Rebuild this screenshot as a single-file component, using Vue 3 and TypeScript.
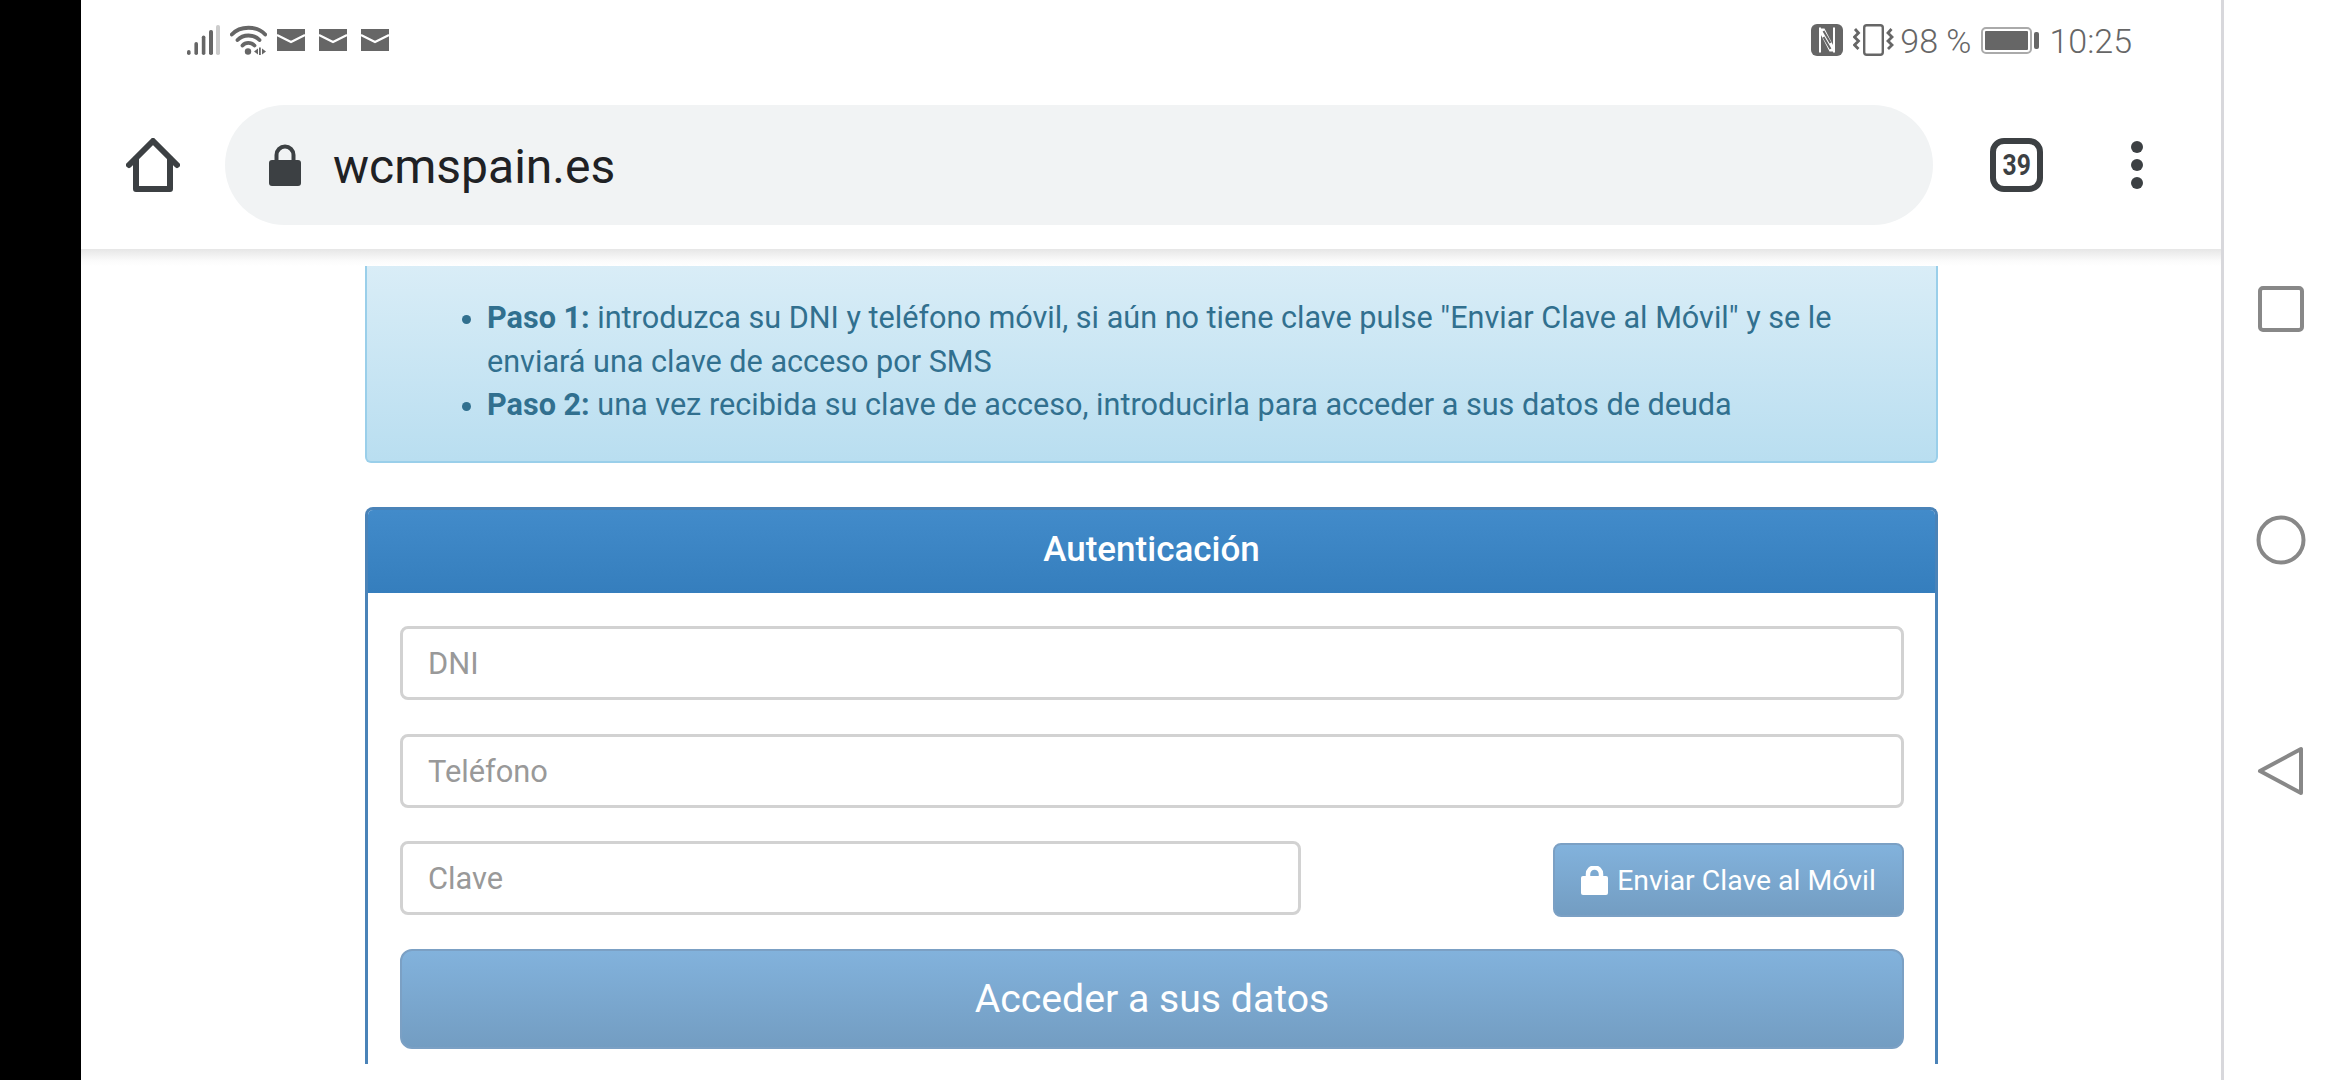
<script setup lang="ts">
const steps = [
  { label: 'Paso 1:', text: ' introduzca su DNI y teléfono móvil, si aún no tiene clave pulse "Enviar Clave al Móvil" y se le enviará una clave de acceso por SMS' },
  { label: 'Paso 2:', text: ' una vez recibida su clave de acceso, introducirla para acceder a sus datos de deuda' },
]
</script>

<template>
  <div class="screen">
    <div class="letterbox"></div>
    <div class="phone">
      <header class="chrome">
        <div class="status">
          <div class="status-left">
            <svg class="signal" width="33" height="30" viewBox="0 0 33 30">
              <rect x="0" y="25" width="3.600" height="5" rx="1.800" fill="#666" />
              <rect x="7.400" y="17" width="3.600" height="13" rx="1.800" fill="#666" />
              <rect x="14.800" y="10.500" width="3.600" height="19.500" rx="1.800" fill="#666" />
              <rect x="22" y="5" width="4" height="25" rx="1.800" fill="#666" />
              <rect x="29" y="0" width="4" height="30" rx="1.800" fill="#ccc" />
            </svg>
            <svg class="wifi" width="37" height="30" viewBox="0 0 37 30" fill="none" stroke="#666" stroke-width="3.800" stroke-linecap="round">
              <path d="M1.800 9.500C10 .5 27 .5 35.200 9.500" />
              <path d="M7.500 15C13 9 24 9 29.500 15" />
              <path d="M12.500 20.500C15.500 17 21 17 24.500 20.500" />
              <circle cx="18" cy="26.500" r="3.200" fill="#666" stroke="none" />
              <path d="M24 26.500L28 23.500V29.500Z" fill="#666" stroke="none" />
              <rect x="29" y="22.500" width="1.800" height="7.500" fill="#666" stroke="none" />
              <path d="M32 23.500V29.500L36 26.500Z" fill="#666" stroke="none" />
            </svg>
            <svg v-for="n in 3" :key="n" class="mail" width="28" height="22" viewBox="0 0 28 22">
              <rect width="28" height="22" fill="#666" />
              <path d="M0 6L14 13L28 6" fill="none" stroke="#fff" stroke-width="2.200" />
            </svg>
          </div>
          <div class="status-right">
            <svg class="nfc" width="32" height="32" viewBox="0 0 32 32">
              <rect width="32" height="32" rx="6" fill="#666" />
              <path d="M9 3.500V28.500M23 3.500V28.500" stroke="#fff" stroke-width="2" />
              <path d="M9.500 4.500H13.500L22.500 22V27.500H18.500L9.500 10Z" fill="#fff" />
              <path d="M12.500 13L19.500 25M12.500 7L19.500 19" stroke="#666" stroke-width="2" />
            </svg>
            <svg class="vibrate" width="41" height="32" viewBox="0 0 41 32" fill="none" stroke="#666">
              <rect x="11.200" y="1.200" width="18.600" height="29.600" rx="2.500" stroke-width="2.400" />
              <path d="M2 5L5.500 9L1.500 13L5.500 17L1.500 21L5.500 25" stroke-width="2.800" />
              <path d="M38.500 5L35 9L39 13L35 17L39 21L35 25" stroke-width="2.800" />
            </svg>
            <span class="status-text pct">98 %</span>
            <svg class="battery" width="58" height="27" viewBox="0 0 58 27">
              <rect x="1" y="1" width="49" height="25" rx="4" fill="none" stroke="#aaa" stroke-width="2" />
              <rect x="4" y="4" width="43" height="19" rx="1" fill="#666" />
              <rect x="53" y="5" width="5" height="17" rx="2" fill="#666" />
            </svg>
            <span class="status-text time">10:25</span>
          </div>
        </div>
        <div class="toolbar">
          <svg class="home" width="54" height="54" viewBox="0 0 54 54" fill="none" stroke="#3c4043" stroke-width="6" stroke-linecap="round" stroke-linejoin="round">
            <path d="M3 27L27 3L51 27" />
            <path d="M10 21V51H44V21" />
          </svg>
          <div class="omnibox">
            <svg class="lock" width="32" height="42" viewBox="0 0 32 42">
              <path d="M7.500 18V11a8.500 8.500 0 0 1 17 0V18" fill="none" stroke="#3c4043" stroke-width="4" />
              <rect y="16" width="32" height="26" rx="3" fill="#3c4043" />
            </svg>
            <span class="url">wcmspain.es</span>
          </div>
          <div class="tabs"><span>39</span></div>
          <div class="menu"><i></i><i></i><i></i></div>
        </div>
      </header>
      <div class="shade"></div>
      <main class="page">
        <section class="alert">
          <ul>
            <li v-for="s in steps" :key="s.label"><strong>{{ s.label }}</strong>{{ s.text }}</li>
          </ul>
        </section>
        <section class="panel">
          <h3 class="panel-head">Autenticación</h3>
          <div class="panel-body">
            <input class="field" placeholder="DNI" />
            <input class="field" placeholder="Teléfono" />
            <div class="key-row">
              <input class="field key" placeholder="Clave" />
              <button class="btn send" disabled>
                <svg width="27" height="29" viewBox="0 0 27 29">
                  <path d="M7 12V8a6.500 6.500 0 0 1 13 0V12" fill="none" stroke="#fff" stroke-width="4.500" />
                  <rect y="10" width="27" height="19" rx="2" fill="#fff" />
                </svg>
                <span>Enviar Clave al Móvil</span>
              </button>
            </div>
            <button class="btn submit" disabled>Acceder a sus datos</button>
          </div>
        </section>
      </main>
    </div>
    <aside class="nav">
      <svg width="60" height="60" viewBox="0 0 60 60" fill="none" stroke="#888" stroke-width="4" stroke-linejoin="round">
        <rect x="9" y="9" width="42" height="42" rx="3" />
      </svg>
      <svg width="60" height="60" viewBox="0 0 60 60" fill="none" stroke="#888" stroke-width="4">
        <circle cx="30" cy="30" r="22.500" />
      </svg>
      <svg width="60" height="60" viewBox="0 0 60 60" fill="none" stroke="#888" stroke-width="4" stroke-linejoin="round">
        <path d="M9 30L50 8V52Z" />
      </svg>
    </aside>
  </div>
</template>

<style scoped>
.screen {
  display: flex;
  width: 2340px;
  height: 1080px;
  overflow: hidden;
  background: #fff;
  font-family: Roboto, "Liberation Sans", sans-serif;
}
.letterbox {
  flex: 0 0 81px;
  background: #000;
}
.phone {
  flex: 0 0 2140px;
  display: flex;
  flex-direction: column;
  min-width: 0;
}
.chrome {
  height: 249px;
  background: #fff;
}
.status {
  height: 80px;
  padding: 0 89px 0 106px;
  display: flex;
  align-items: center;
  justify-content: space-between;
}
.status-left,
.status-right {
  display: flex;
  align-items: center;
}
.wifi { margin-left: 10px; }
.mail { margin-left: 14px; }
.wifi + .mail { margin-left: 10px; }
.vibrate { margin-left: 10px; }
.status-text {
  color: #666;
  font-size: 34px;
  font-weight: 300;
  line-height: 40px;
  padding-top: 2px;
}
.pct { margin-left: 6px; }
.battery { margin-left: 10px; }
.time { margin-left: 10px; }
.toolbar {
  height: 169px;
  padding: 25px 0 24px 45px;
  box-sizing: border-box;
  display: flex;
  align-items: center;
}
.omnibox {
  margin-left: 45px;
  width: 1708px;
  height: 120px;
  border-radius: 60px;
  background: #f1f3f4;
  display: flex;
  align-items: center;
  padding-left: 44px;
  box-sizing: border-box;
}
.url {
  margin-left: 32px;
  padding-top: 3px;
  color: #202124;
  font-size: 48px;
  line-height: 60px;
}
.tabs {
  margin-left: 57px;
  width: 53px;
  height: 54px;
  box-sizing: border-box;
  border: 6px solid #3c4043;
  border-radius: 14px;
  display: flex;
  align-items: center;
  justify-content: center;
  color: #3c4043;
  font-size: 29px;
  font-weight: 700;
}
.tabs span {
  display: inline-block;
  transform: scaleX(0.85);
}
.menu {
  margin-left: 88px;
  width: 12px;
  display: flex;
  flex-direction: column;
  gap: 6px;
}
.menu i {
  width: 12px;
  height: 12px;
  border-radius: 50%;
  background: #3c4043;
}
.shade {
  height: 17px;
  background: linear-gradient(#e6e6e6, #fbfbfb 70%, #fff);
}
.page {
  padding: 0 284px;
}
.alert {
  width: 1573px;
  height: 197px;
  box-sizing: border-box;
  padding: 30px 30px 0;
  border: 2px solid #9acfea;
  border-top: 0;
  border-radius: 0 0 6px 6px;
  background: linear-gradient(#d9edf7, #b9def0);
  color: #31708f;
  font-size: 30.600px;
  line-height: 43.500px;
}
.alert ul {
  margin: 0;
  padding: 0 0 0 90px;
}
.alert strong { font-weight: 700; }
.panel {
  margin-top: 44px;
  width: 1573px;
  height: 557px;
  box-sizing: border-box;
  overflow: hidden;
  border: 3px solid #4a83b8;
  border-bottom: 0;
  border-radius: 8px 8px 0 0;
  background: #fff;
}
.panel-head {
  margin: 0;
  height: 83px;
  background: linear-gradient(#428bca, #357ebd);
  color: #fff;
  font-size: 35px;
  font-weight: 500;
  line-height: 80px;
  text-align: center;
}
.panel-body {
  padding: 33px 31px 0 32px;
  display: flex;
  flex-direction: column;
  gap: 34px;
}
.field {
  width: 100%;
  height: 74px;
  box-sizing: border-box;
  padding: 0 25px;
  border: 3px solid #d2d2d2;
  border-radius: 8px;
  background: #fff;
  font: 400 30.800px Roboto, sans-serif;
  color: #555;
  outline: none;
}
.field::placeholder {
  color: #999;
  opacity: 1;
}
.key-row {
  display: flex;
  justify-content: space-between;
  align-items: flex-start;
  margin-top: -1px;
}
.field.key { width: 901px; }
.btn {
  box-sizing: border-box;
  border: 2px solid #7ba0c4;
  color: #fff;
  background: linear-gradient(#82b2dc, #739dc2);
  font-family: Roboto, sans-serif;
  font-weight: 400;
}
.send {
  width: 351px;
  height: 74px;
  margin-top: 2px;
  border-radius: 8px;
  font-size: 28.400px;
  display: flex;
  align-items: center;
  justify-content: center;
  gap: 9px;
}
.submit {
  width: 100%;
  height: 100px;
  margin-top: -2px;
  border-radius: 12px;
  font-size: 39.200px;
}
.nav {
  flex: 1;
  border-left: 3px solid #d8d8dc;
  display: flex;
  flex-direction: column;
  align-items: center;
  padding-top: 279px;
  padding-right: 3px;
  gap: 171px;
}
</style>
